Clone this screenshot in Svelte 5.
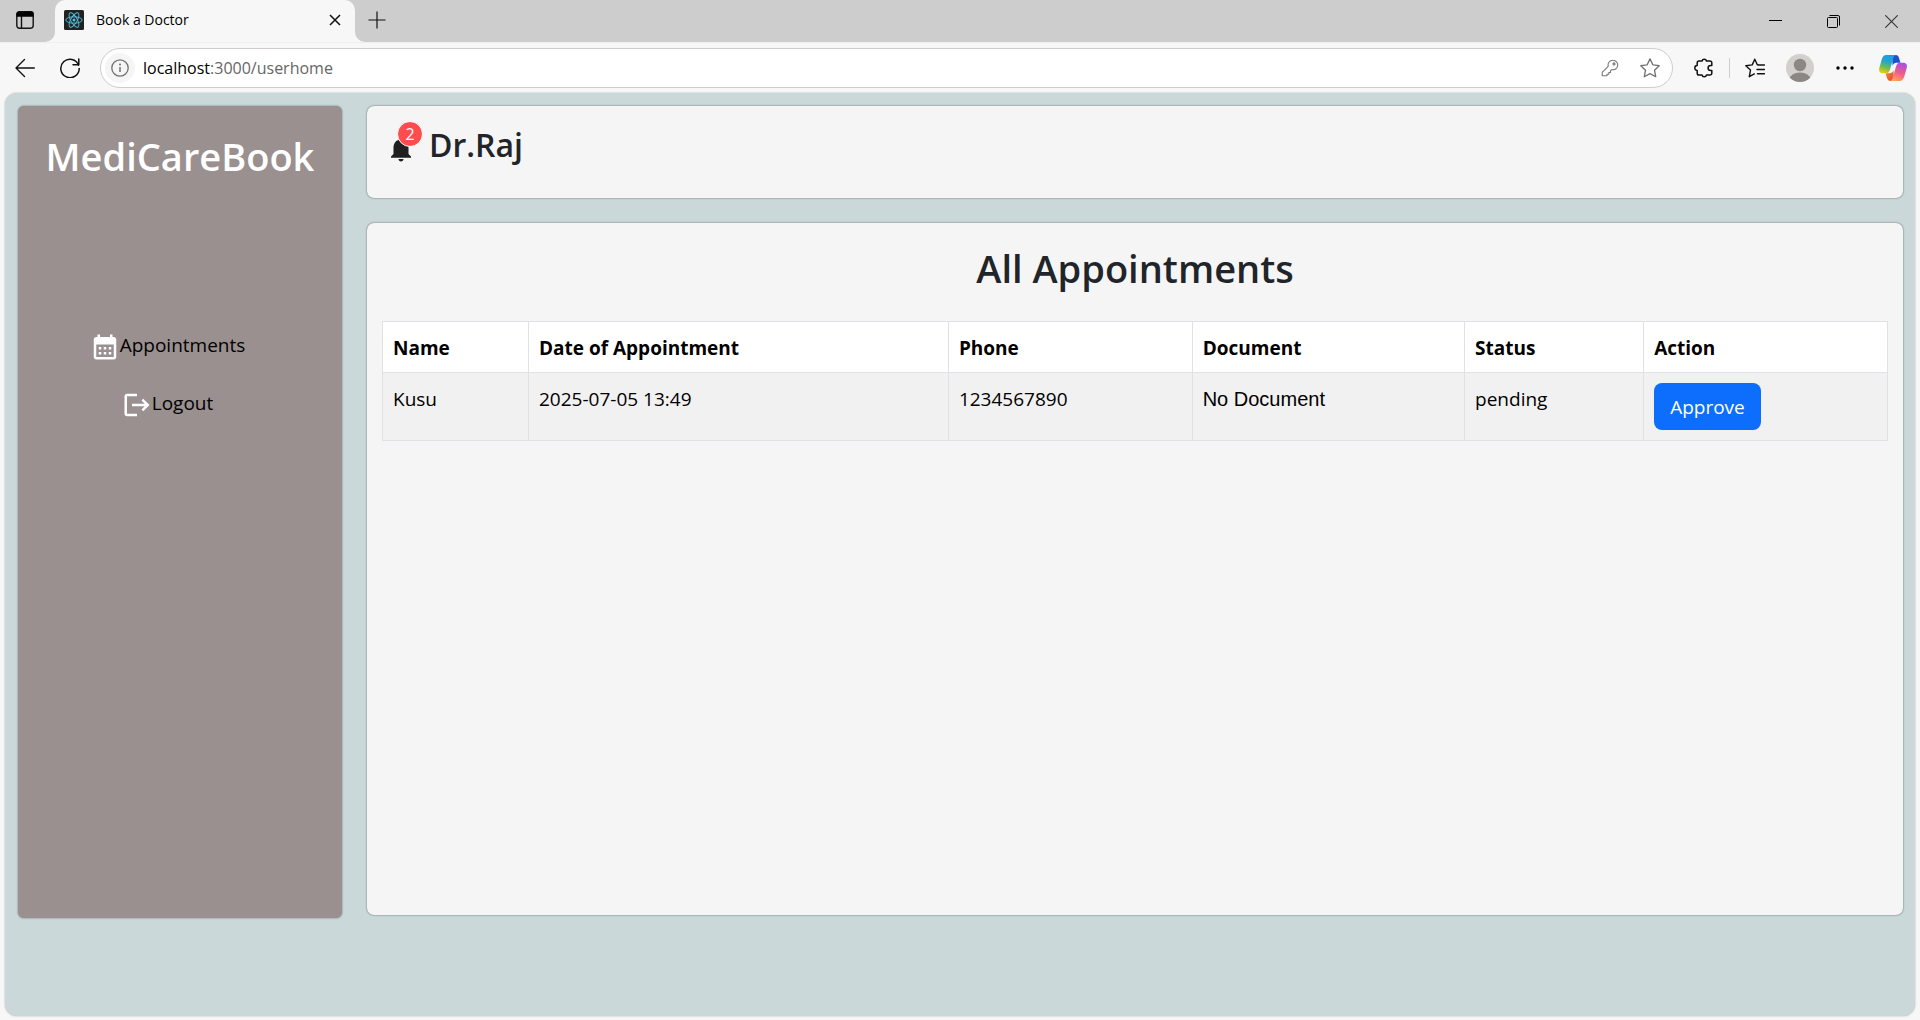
<script>
  const columns = [
    { key: 'name', label: 'Name' },
    { key: 'date', label: 'Date of Appointment' },
    { key: 'phone', label: 'Phone' },
    { key: 'document', label: 'Document' },
    { key: 'status', label: 'Status' },
    { key: 'action', label: 'Action' }
  ];

  let path = $state(':3000/userhome');
  let appointments = $state([
    { name: 'Kusu', date: '2025-07-05 13:49', phone: '1234567890', document: null, status: 'pending' }
  ]);

  function approve(appointment) {
    appointment.status = 'approved';
  }
</script>

<div class="window">
  <header class="strip">
    <div class="strip-start">
      <button class="plain" aria-label="Tab actions">
        <svg width="18" height="18" viewBox="0 0 18 18" fill="none" stroke="#111" stroke-width="1.4">
          <rect x="0.8" y="0.8" width="16.4" height="16.4" rx="2.6" />
          <path d="M5.5 5v12" />
          <path d="M3 .5h12a2.5 2.5 0 0 1 2.5 2.5v2.8H.5V3A2.5 2.5 0 0 1 3 .5z" fill="#000" stroke="none" />
        </svg>
      </button>
    </div>
    <div class="tab-slot">
      <div class="tab">
        <svg width="20" height="20" viewBox="0 0 20 20" fill="none" stroke="#53c1de" stroke-width="0.9">
          <rect width="20" height="20" rx="1.5" fill="#222" stroke="none" />
          <ellipse cx="10" cy="10" rx="8.2" ry="3.2" />
          <ellipse cx="10" cy="10" rx="8.2" ry="3.2" transform="rotate(60 10 10)" />
          <ellipse cx="10" cy="10" rx="8.2" ry="3.2" transform="rotate(120 10 10)" />
          <circle cx="10" cy="10" r="1.5" fill="#53c1de" stroke="none" />
        </svg>
        <span class="tab-title">Book a Doctor</span>
        <button class="plain tab-close" aria-label="Close tab">
          <svg width="12" height="12" viewBox="0 0 12 12" stroke="#111" stroke-width="1.5"><path d="M1 1l10 10M11 1L1 11" /></svg>
        </button>
      </div>
    </div>
    <div class="strip-end">
      <button class="plain new-tab" aria-label="New tab">
        <svg width="18" height="18" viewBox="0 0 18 18" stroke="#111" stroke-width="1.2"><path d="M9 .5v17M.5 9h17" /></svg>
      </button>
      <div class="window-controls">
        <button class="plain" aria-label="Minimize">
          <svg width="13" height="13" viewBox="0 0 13 13" stroke="#000"><path d="M0 5.5h13" /></svg>
        </button>
        <button class="plain" aria-label="Restore">
          <svg width="13" height="13" viewBox="0 0 13 13" fill="none" stroke="#000">
            <rect x="0.5" y="2.5" width="10" height="10" rx="1" /><path d="M2.5.5H11A1.500 1.500 0 0 1 12.500 2v8.500" />
          </svg>
        </button>
        <button class="plain" aria-label="Close">
          <svg width="13" height="13" viewBox="0 0 13 13" stroke="#333" stroke-width="1.1"><path d="M.3.3l12.400 12.400M12.700.3L.3 12.700" /></svg>
        </button>
      </div>
    </div>
  </header>

  <div class="toolbar">
    <nav class="history" aria-label="Browser">
      <button class="plain" aria-label="Back">
        <svg width="20" height="20" viewBox="0 0 20 20" fill="none" stroke="#111" stroke-width="1.4" stroke-linecap="round" stroke-linejoin="round"><path d="M19.300 10H1M9.500 1.500L1 10l8.500 8.500" /></svg>
      </button>
      <button class="plain" aria-label="Refresh">
        <svg width="20" height="20" viewBox="0 0 20 20" fill="none" stroke="#111" stroke-width="1.500" stroke-linecap="round" stroke-linejoin="round"><path d="M18.600 7.200A9.200 9.200 0 1 0 19.200 10.500M18.800 1v5.800H13" /></svg>
      </button>
    </nav>
    <div class="address">
      <button class="plain info" aria-label="Site information">
        <svg width="18" height="18" viewBox="0 0 18 18" fill="none" stroke="#707070" stroke-width="1.3">
          <circle cx="9" cy="9" r="8.200" /><path d="M9 8v5" stroke-width="1.500" /><circle cx="9" cy="5.500" r="1" fill="#707070" stroke="none" />
        </svg>
      </button>
      <label for="address">localhost</label>
      <input id="address" type="text" bind:value={path} spellcheck="false" />
      <button class="plain" aria-label="Saved passwords">
        <svg width="18" height="18" viewBox="0 0 18 18" fill="none" stroke="#777" stroke-width="1.1" stroke-linejoin="round">
          <path d="M12 1.200a4.800 4.800 0 1 1-1.400 9.400L9.500 11.800v1.700H7.800v1.700H6v1.600H1.200v-3.500l6-6A4.800 4.800 0 0 1 12 1.200z" /><circle cx="13" cy="4.900" r="1" />
        </svg>
      </button>
      <button class="plain" aria-label="Add to favorites">
        <svg width="20" height="20" viewBox="0 0 20 20" fill="none" stroke="#707070" stroke-width="1.300" stroke-linejoin="round"><path d="M10 .9l2.800 5.900 6.400.9-4.700 4.500 1.200 6.500L10 15.600l-5.700 3.100 1.200-6.500L.8 7.700l6.400-.9z" /></svg>
      </button>
    </div>
    <div class="actions">
      <button class="plain" aria-label="Extensions">
        <svg width="20" height="20" viewBox="0 0 20 20" fill="none" stroke="#111" stroke-width="1.500" stroke-linejoin="round"><path d="M5 3h3a2.300 2.300 0 0 1 4.500 0H16a1.800 1.800 0 0 1 1.800 1.800v2.700h-1.200a2.500 2.500 0 0 0 0 5h1.200v2.700A1.800 1.800 0 0 1 16 17h-3.500a2.300 2.300 0 0 1-4.500 0H5a1.800 1.800 0 0 1-1.800-1.800v-2.800a2.400 2.400 0 0 1 0-4.800V4.800A1.800 1.800 0 0 1 5 3z" /></svg>
      </button>
      <span class="divider"></span>
      <button class="plain" aria-label="Favorites">
        <svg width="20" height="20" viewBox="0 0 20 20" fill="none" stroke="#111" stroke-width="1.400" stroke-linecap="round" stroke-linejoin="round"><path d="M13 6.800h-.7L9.800 1.200 7.200 6.900.8 7.700l4.700 4.400-1.200 6.600 5-2.800M13 7h6.500M12 11.500h7.500M12.500 15.800h7" /></svg>
      </button>
      <button class="plain" aria-label="Profile">
        <svg width="28" height="28" viewBox="0 0 28 28">
          <clipPath id="avatar"><circle cx="14" cy="14" r="14" /></clipPath>
          <g clip-path="url(#avatar)"><rect width="28" height="28" fill="#d2d0cd" /><circle cx="14" cy="11" r="6.200" fill="#8b8785" /><ellipse cx="14" cy="25.500" rx="10.500" ry="7" fill="#8b8785" /></g>
        </svg>
      </button>
      <button class="plain" aria-label="Settings and more">
        <svg width="18" height="4" viewBox="0 0 18 4"><circle cx="2" cy="2" r="1.700" /><circle cx="9" cy="2" r="1.700" /><circle cx="16" cy="2" r="1.700" /></svg>
      </button>
      <button class="plain copilot" aria-label="Copilot">
        <svg width="28" height="26" viewBox="0 0 28 26">
          <defs>
            <linearGradient id="cool" x1="0.600" y1="0" x2="0.300" y2="1"><stop offset="0" stop-color="#1a9be8" /><stop offset="0.400" stop-color="#2aa5c8" /><stop offset="0.700" stop-color="#6fc04a" /><stop offset="1" stop-color="#f2c811" /></linearGradient>
            <linearGradient id="warm" x1="0.700" y1="0" x2="0.300" y2="1"><stop offset="0" stop-color="#a552e8" /><stop offset="0.500" stop-color="#ee5a8c" /><stop offset="1" stop-color="#ffa45c" /></linearGradient>
            <linearGradient id="deep" x1="0" y1="0" x2="1" y2="1"><stop offset="0" stop-color="#1256c4" /><stop offset="1" stop-color="#2a4fd0" /></linearGradient>
            <linearGradient id="ember" x1="0" y1="0" x2="1" y2="1"><stop offset="0" stop-color="#f7902b" /><stop offset="1" stop-color="#e9403a" /></linearGradient>
          </defs>
          <path d="M13 0h3.500c2.200 0 3 1.200 3.600 3.200l1.400 4.600h-4c-2 0-3.300 1-3.900 3z" fill="url(#deep)" />
          <path d="M15 26h-3.500c-2.200 0-3-1.200-3.600-3.200l-1.400-4.600h4c2 0 3.300-1 3.900-3z" fill="url(#ember)" />
          <path d="M7.500 0H17c-1.400.3-2.200 1.500-2.700 3.200l-3.400 11.500c-.7 2.400-2 3.500-4.200 3.500H3.500C.8 18.200-.5 16 .3 13L2.800 4.200C3.600 1.500 5 0 7.500 0z" fill="url(#cool)" />
          <path d="M20.500 26H11c1.400-.3 2.200-1.500 2.700-3.200l3.400-11.500c.7-2.400 2-3.500 4.200-3.500h3.200c2.700 0 4 2.200 3.200 5.200l-2.500 8.800c-.8 2.700-2.200 4.200-4.700 4.200z" fill="url(#warm)" />
        </svg>
      </button>
    </div>
  </div>

  <div class="page">
    <aside class="sidebar">
      <h1>MediCareBook</h1>
      <nav class="menu" aria-label="Main">
        <a href="#appointments">
          <svg width="30" height="30" viewBox="0 0 24 24" fill="#fff"><path d="M19 4h-1V2h-2v2H8V2H6v2H5c-1.110 0-1.990.9-1.990 2L3 20c0 1.100.89 2 2 2h14c1.100 0 2-.9 2-2V6c0-1.100-.9-2-2-2zm0 16H5V10h14v10zM9 14H7v-2h2v2zm4 0h-2v-2h2v2zm4 0h-2v-2h2v2zm-8 4H7v-2h2v2zm4 0h-2v-2h2v2zm4 0h-2v-2h2v2z" /></svg>
          <span>Appointments</span>
        </a>
        <a href="#logout">
          <svg width="30" height="30" viewBox="0 0 24 24" fill="#fff"><path d="M17 7l-1.410 1.410L18.170 11H8v2h10.170l-2.580 2.580L17 17l5-5zM4 5h8V3H4c-1.100 0-2 .9-2 2v14c0 1.100.9 2 2 2h8v-2H4V5z" /></svg>
          <span>Logout</span>
        </a>
      </nav>
    </aside>

    <main>
      <section class="card user">
        <button class="plain bell" aria-label="Notifications">
          <svg width="30" height="30" viewBox="0 0 24 24" fill="#1f1f1f"><path d="M12 22c1.100 0 2-.9 2-2h-4c0 1.100.89 2 2 2zm6-6v-5c0-3.070-1.640-5.640-4.500-6.320V4c0-.83-.67-1.500-1.500-1.500s-1.500.67-1.500 1.500v.68C7.630 5.360 6 7.920 6 11v5l-2 2v1h16v-1l-2-2z" /></svg>
          <span class="badge">2</span>
        </button>
        <h3>Dr.Raj</h3>
      </section>

      <section class="card content" id="appointments">
        <h2>All Appointments</h2>
        <table>
          <colgroup>
            {#each columns as column}<col class={column.key} />{/each}
          </colgroup>
          <thead>
            <tr>{#each columns as column}<th scope="col">{column.label}</th>{/each}</tr>
          </thead>
          <tbody>
            {#each appointments as appointment}
              <tr>
                <td>{appointment.name}</td>
                <td>{appointment.date}</td>
                <td>{appointment.phone}</td>
                <td class="file">{appointment.document ?? 'No Document'}</td>
                <td>{appointment.status}</td>
                <td><button class="approve" onclick={() => approve(appointment)}>Approve</button></td>
              </tr>
            {/each}
          </tbody>
        </table>
      </section>
    </main>
  </div>
</div>

<style>
  :global(body) {
    margin: 0;
    background: #f7f7f7;
  }

  .window {
    display: flex;
    flex-direction: column;
    box-sizing: border-box;
    min-height: 100vh;
    padding-bottom: 4px;
    font-family: 'Open Sans', 'Noto Sans', sans-serif;
    font-size: 19px;
    line-height: 30px;
    color: #000;
  }

  h1, h2, h3 {
    margin: 0;
    font-weight: 600;
  }

  svg {
    display: block;
    flex: none;
  }

  .plain {
    display: flex;
    align-items: center;
    justify-content: center;
    padding: 0;
    border: 0;
    background: none;
    font: inherit;
  }

  .strip {
    display: flex;
    height: 42px;
    border-bottom: 1px solid #efefef;
  }

  .strip-start {
    display: flex;
    box-sizing: border-box;
    width: 55px;
    padding: 0 5px 2px 0;
    justify-content: center;
    background: #cdcdcd;
    border-bottom-right-radius: 10px;
  }

  .tab-slot {
    width: 300px;
    background: linear-gradient(#cdcdcd 50%, #f7f7f7 50%);
  }

  .tab {
    display: flex;
    align-items: center;
    box-sizing: border-box;
    height: 42px;
    padding: 0 14px 2px 9px;
    gap: 12px;
    background: #f7f7f7;
    border-radius: 10px 10px 0 0;
  }

  .tab-title {
    flex: 1;
    font-size: 14px;
  }

  .strip-end {
    display: flex;
    flex: 1;
    justify-content: space-between;
    background: #cdcdcd;
    border-bottom-left-radius: 10px;
  }

  .new-tab {
    width: 44px;
    padding-bottom: 3px;
  }

  .window-controls {
    display: flex;
  }

  .window-controls button {
    width: 58px;
  }

  .toolbar {
    display: flex;
    align-items: center;
    box-sizing: border-box;
    height: 50px;
    padding: 0 3px 0 4px;
  }

  .history,
  .actions {
    display: flex;
    align-items: center;
    gap: 3px;
  }

  .history button,
  .actions button {
    width: 42px;
    height: 40px;
  }

  .actions .copilot {
    width: 48px;
  }

  .divider {
    width: 1px;
    height: 20px;
    margin: 0 1px;
    background: #ccc;
  }

  .address {
    display: flex;
    flex: 1;
    align-items: center;
    box-sizing: border-box;
    height: 40px;
    margin: 0 10px 0 9px;
    padding: 0 2px 0 4px;
    border: 1px solid #cdcdcd;
    border-radius: 20px;
    background: #fff;
    font-size: 16px;
  }

  .address .plain {
    width: 40px;
    height: 30px;
  }

  .address .info {
    width: 30px;
    margin-right: 8px;
    border-radius: 50%;
    background: #f5f5f5;
  }

  .address input {
    flex: 1;
    min-width: 0;
    padding: 0;
    border: 0;
    outline: 0;
    background: none;
    font: inherit;
    color: #666;
  }

  .page {
    display: flex;
    flex: 1;
    align-items: flex-start;
    gap: 25px;
    margin: 0 5px;
    padding: 13px 12px 0 13px;
    border-radius: 12px;
    background: #cad8d9;
    box-shadow: 0 0 2px rgba(0, 0, 0, 0.3);
  }

  .sidebar {
    box-sizing: border-box;
    flex: 0 0 324px;
    min-height: calc(100vh - 208px);
    padding-top: 26px;
    border-radius: 6px;
    background: #9a9090;
    box-shadow: 0 0 2px rgba(0, 0, 0, 0.5);
  }

  h1 {
    font-size: 38px;
    line-height: 48px;
    text-align: center;
    color: #fff;
  }

  .menu {
    display: flex;
    flex-direction: column;
    align-items: center;
    gap: 28px;
    padding: 152px 25px 0 0;
  }

  .menu a {
    display: flex;
    color: #000;
    text-decoration: none;
  }

  .menu span {
    line-height: 26px;
  }

  main {
    display: flex;
    flex: 1;
    flex-direction: column;
    box-sizing: border-box;
    gap: 25px;
    min-width: 0;
    min-height: calc(100vh - 208px);
    padding-bottom: 3px;
  }

  .card {
    box-sizing: border-box;
    border-radius: 7px;
    background: #f5f5f5;
    box-shadow: 0 0 2px rgba(0, 0, 0, 0.6);
  }

  .user {
    display: flex;
    gap: 13px;
    min-height: 92px;
    padding: 19px;
  }

  .bell {
    position: relative;
    width: 30px;
    height: 30px;
    margin-top: 9px;
  }

  .badge {
    position: absolute;
    top: -13px;
    right: -7px;
    box-sizing: border-box;
    width: 26px;
    height: 26px;
    border: 1px solid #fff;
    border-radius: 50%;
    background: #ff4d4f;
    font-size: 16px;
    line-height: 24px;
    color: #fff;
  }

  h3 {
    font-size: 32px;
    line-height: 40px;
    color: #212529;
  }

  .content {
    flex: 1;
    padding: 21px 15px;
  }

  h2 {
    margin-bottom: 29px;
    font-size: 38px;
    line-height: 48px;
    text-align: center;
    color: #212529;
  }

  table {
    width: 100%;
    table-layout: fixed;
    border-collapse: collapse;
  }

  .name { width: 9.7%; }
  .date { width: 27.9%; }
  .phone { width: 16.2%; }
  .document { width: 18.1%; }
  .status { width: 11.9%; }
  .action { width: 16.2%; }

  th,
  td {
    padding: 10px;
    border: 1px solid #dee2e6;
    text-align: left;
    vertical-align: top;
  }

  th {
    padding: 11px 10px 9px;
    background: #fff;
    font-weight: 700;
  }

  td {
    line-height: 32px;
    background: #f1f1f1;
  }

  .file {
    font-family: 'Liberation Sans', Arial, sans-serif;
    font-size: 20px;
  }

  .approve {
    display: block;
    padding: 9px 16px 7px;
    border: 0;
    border-radius: 8px;
    background: #0d6efd;
    font: inherit;
    line-height: 31px;
    color: #fff;
  }
</style>
